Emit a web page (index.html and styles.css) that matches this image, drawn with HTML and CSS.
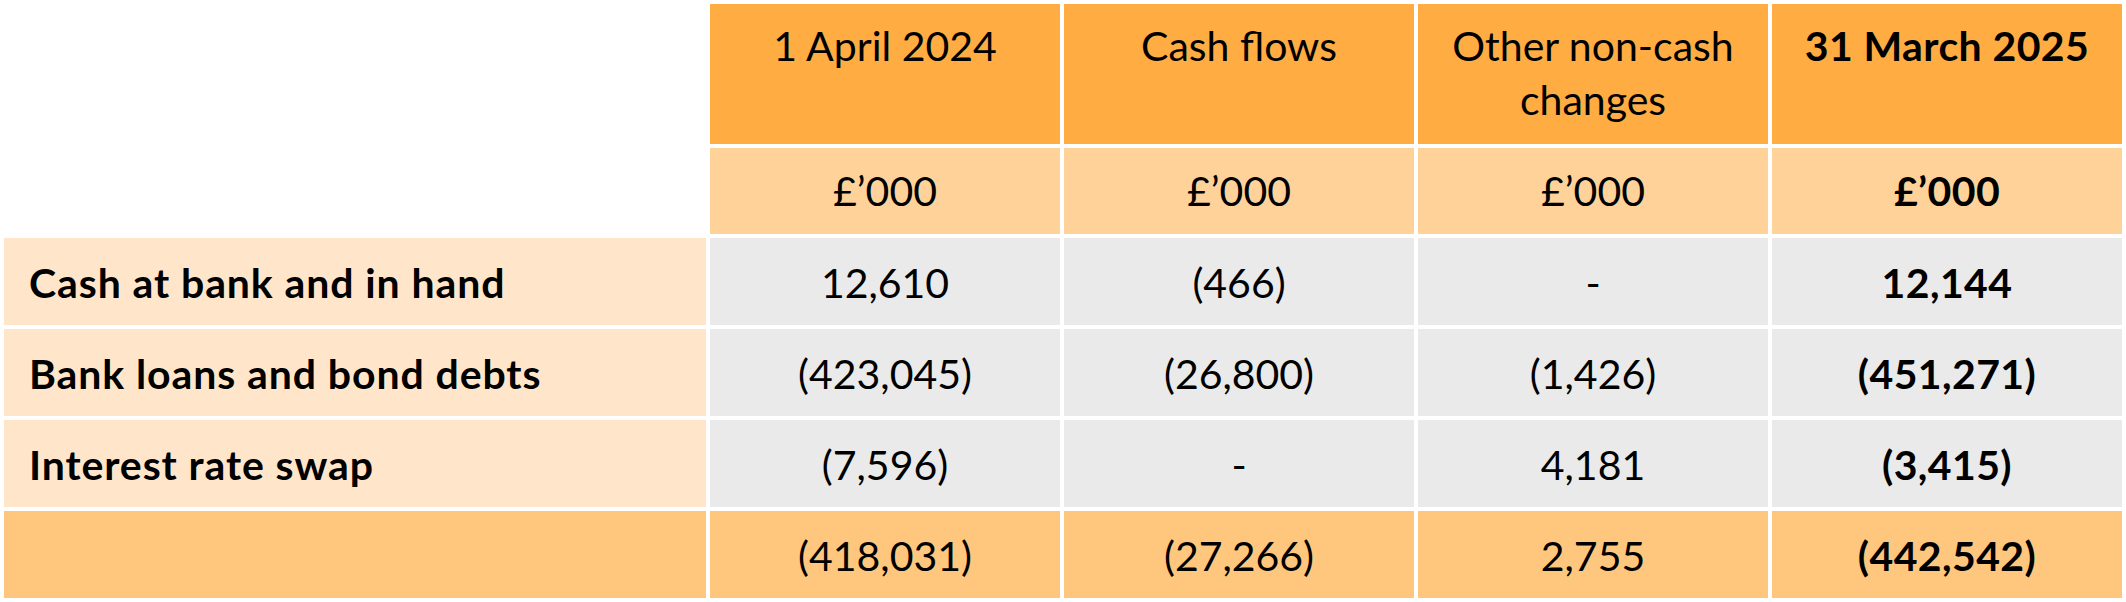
FILE: index.html
```html
<!DOCTYPE html>
<html lang="en">
<head>
<meta charset="utf-8">
<title>Net debt reconciliation</title>
<link rel="stylesheet" href="styles.css">
</head>
<body>
<div class="table">
  <div class="cell blank"></div>
  <div class="cell head">1 April 2024</div>
  <div class="cell head">Cash flows</div>
  <div class="cell head">Other non-cash changes</div>
  <div class="cell head strong">31 March 2025</div>

  <div class="cell blank"></div>
  <div class="cell unit">£’000</div>
  <div class="cell unit">£’000</div>
  <div class="cell unit">£’000</div>
  <div class="cell unit strong">£’000</div>

  <div class="cell label">Cash at bank and in hand</div>
  <div class="cell data">12,610</div>
  <div class="cell data">(466)</div>
  <div class="cell data">-</div>
  <div class="cell data strong">12,144</div>

  <div class="cell label">Bank loans and bond debts</div>
  <div class="cell data">(423,045)</div>
  <div class="cell data">(26,800)</div>
  <div class="cell data">(1,426)</div>
  <div class="cell data strong">(451,271)</div>

  <div class="cell label">Interest rate swap</div>
  <div class="cell data">(7,596)</div>
  <div class="cell data">-</div>
  <div class="cell data">4,181</div>
  <div class="cell data strong">(3,415)</div>

  <div class="cell total"></div>
  <div class="cell total">(418,031)</div>
  <div class="cell total">(27,266)</div>
  <div class="cell total">2,755</div>
  <div class="cell total strong">(442,542)</div>
</div>
</body>
</html>
```

FILE: styles.css
```css
html, body {
  margin: 0;
  padding: 0;
  background: #ffffff;
}

body {
  padding: 4px;
  font-family: Lato, "Open Sans", sans-serif;
  font-size: 41px;
  line-height: 53.5px;
  color: #000000;
}

.table {
  display: grid;
  grid-template-columns: 702px repeat(4, 350px);
  grid-template-rows: 140px 86px 87px 87px 87px 87px;
  gap: 4px;
}

.cell {
  display: flex;
  align-items: center;
  justify-content: center;
  text-align: center;
  box-sizing: border-box;
}

.blank {
  background: transparent;
}

.head {
  align-items: flex-start;
  padding: 15px 8px 0;
  background: #ffac43;
}

.unit {
  background: #ffd299;
}

.label {
  justify-content: flex-start;
  text-align: left;
  padding: 2px 0 0 25px;
  font-weight: 700;
  letter-spacing: 0.9px;
  background: #ffe6cb;
}

.data {
  padding-top: 2px;
  background: #eaeaea;
}

.total {
  padding-top: 2px;
  background: #ffc77d;
}

.strong {
  font-weight: 700;
  letter-spacing: 0.4px;
}
```
